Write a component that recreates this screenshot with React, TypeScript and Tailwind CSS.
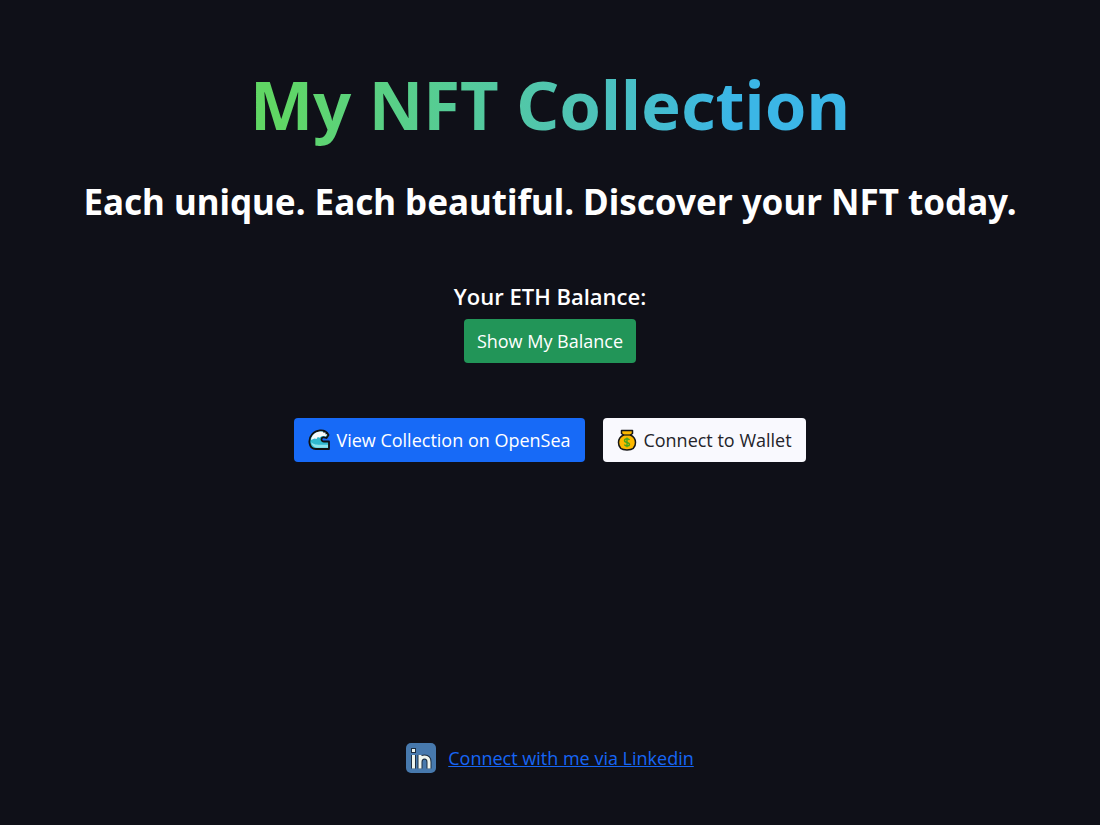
import { useState } from 'react';

const LINKEDIN_URL = 'https://www.linkedin.com';

function WaveIcon() {
  return (
    <svg viewBox="0 0 22 22" className="size-[22px] shrink-0" aria-hidden="true">
      <path
        d="M1.500 14C.5 7 6 2 12 1.500c4-.3 7 1.500 8.500 4.500l-2 3c-2-1.200-4.800-1-5 1-.2 1.500 1 2.500 2.500 2.500h5V20H8c-3.500 0-6-2.500-6.500-6Z"
        fill="#2fb9cf"
        stroke="#111"
        strokeWidth="1.800"
        strokeLinejoin="round"
      />
      <path d="M3 11C3.500 6 7.500 3 12 2.500c3.500-.2 5.500 1 7 3l-1.200 2c-2.500-1.200-5-.5-6 1.200l-2-.7-1.300 2-2-.5L3 11Z" fill="#f7fafa" />
      <path d="M3 13c.8 3.500 3 5.500 6 5.800h11v-3h-8c-5 0-7-1-9-2.800Z" fill="#8be3ec" />
      <path d="M16 1.500v2.200M19.500 4l-2 1" stroke="#111" strokeWidth="1.200" />
    </svg>
  );
}

function MoneyBagIcon() {
  return (
    <svg viewBox="0 0 20 22" className="h-[22px] w-5 shrink-0" aria-hidden="true">
      <path
        d="M4.500 1.500h11v3l-2 1.500c3 1.500 5 4 5 7.500 0 4.500-3 7.500-8.500 7.500s-8.500-3-8.500-7.500c0-3.500 2-6 5-7.500l-2-1.500v-3Z"
        fill="#fdb900"
        stroke="#171717"
        strokeWidth="1.500"
        strokeLinejoin="round"
      />
      <path d="M6 6h8" stroke="#171717" strokeWidth="1.200" />
      <path
        d="M12.500 11c-.5-1-1.300-1.300-2.500-1.300-1.500 0-2.500.6-2.500 1.800 0 2.800 5 1.200 5 3.700 0 1.200-1 1.800-2.500 1.800-1.300 0-2.200-.5-2.600-1.500M10 8.500v9.700"
        fill="none"
        stroke="#4aa51c"
        strokeWidth="1.400"
      />
    </svg>
  );
}

function LinkedinIcon() {
  const mark = 'M7.500 12v13.500M14 25.500V12M14 19c0-3.500 1.500-5 4.500-5s4.500 1.500 4.500 5v6.500';
  return (
    <svg viewBox="0 0 30 30" className="size-[30px] shrink-0" aria-hidden="true">
      <rect width="30" height="30" rx="5" fill="#4779ad" />
      <g fill="none" stroke="#1c2e40" strokeWidth="5">
        <path d={mark} />
        <path d="M7.500 5v5" />
      </g>
      <g fill="none" stroke="#eef5ee" strokeWidth="3">
        <path d={mark} />
        <path d="M7.500 6v3" />
      </g>
    </svg>
  );
}

export default function App() {
  const [showBalance, setShowBalance] = useState(false);

  const buttonClass = 'flex items-center justify-center h-11 rounded text-lg whitespace-nowrap cursor-pointer';

  return (
    <div className="flex min-h-screen flex-col items-center bg-[#0f1018] pt-14 pb-[52px] font-['Open_Sans','Noto_Sans',sans-serif] text-white">
      <main className="flex w-full grow flex-col items-center text-center">
        <h1 className="bg-linear-to-r from-[#60d664] from-5% via-[#4fc3b5] via-55% to-[#3bb6e6] to-80% bg-clip-text font-['Noto_Sans',sans-serif] text-[67px] leading-[96px] font-bold text-transparent">
          My NFT Collection
        </h1>
        <p className="mt-6 font-['Noto_Sans',sans-serif] text-[35px] leading-[52px] font-bold">
          Each unique. Each beautiful. Discover your NFT today.
        </p>

        {/* Balance */}
        <section className="mt-[52px] flex flex-col items-center">
          <h2 className="text-[22px] leading-8 font-semibold">Your ETH Balance:</h2>
          <button
            type="button"
            onClick={() => setShowBalance(!showBalance)}
            className={`${buttonClass} mt-[7px] w-[172px] bg-[#229558]`}
          >
            {showBalance ? '0 ETH' : 'Show My Balance'}
          </button>
        </section>

        {/* Actions */}
        <div className="mt-[55px] flex flex-wrap justify-center gap-[18px]">
          <button type="button" className={`${buttonClass} w-[291px] gap-1.5 bg-[#176af7]`}>
            <WaveIcon />
            View Collection on OpenSea
          </button>
          <button type="button" className={`${buttonClass} w-[203px] gap-1.5 bg-[#f9f9fe] text-[#24242a]`}>
            <MoneyBagIcon />
            Connect to Wallet
          </button>
        </div>
      </main>

      <footer className="flex items-center gap-3">
        <LinkedinIcon />
        <a href={LINKEDIN_URL} className="text-lg leading-[30px] text-[#1766f5] underline">
          Connect with me via Linkedin
        </a>
      </footer>
    </div>
  );
}
